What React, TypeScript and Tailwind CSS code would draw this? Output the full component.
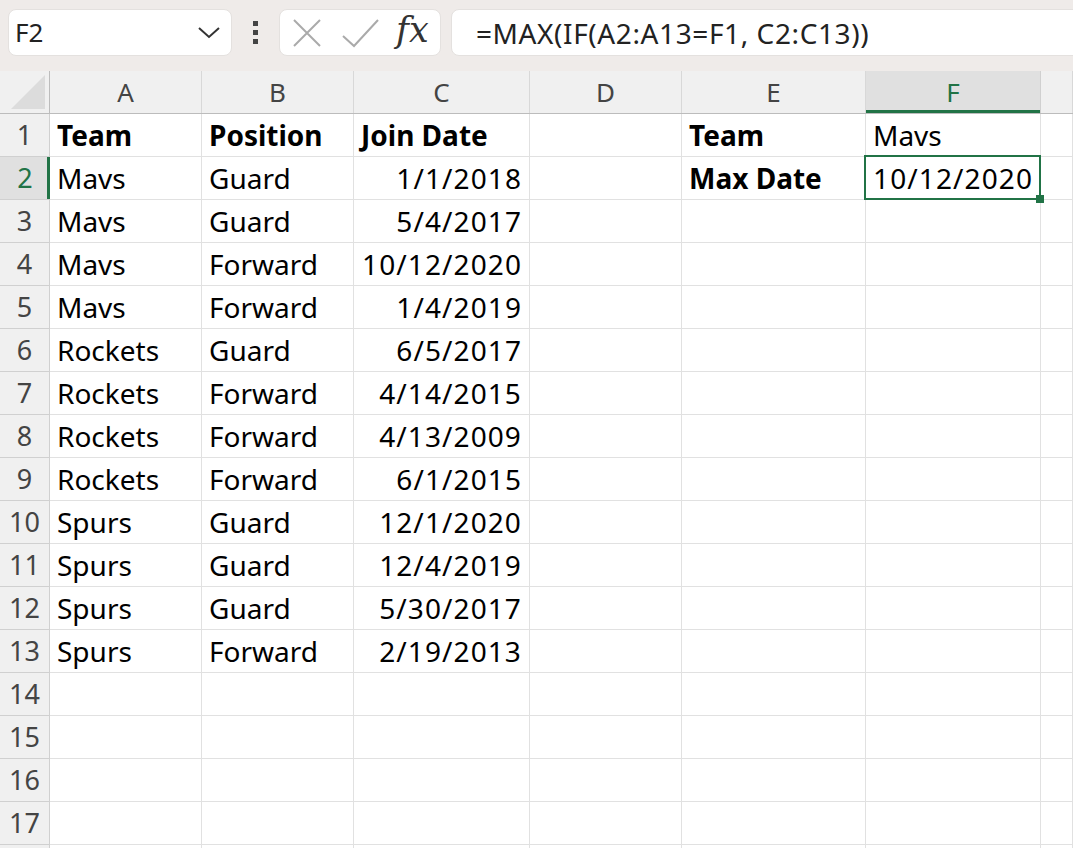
import React from "react";

const cols = ["A", "B", "C", "D", "E", "F", "G"];

const data: string[][] = [
  ["Team", "Position", "Join Date", "", "Team", "Mavs"],
  ["Mavs", "Guard", "1/1/2018", "", "Max Date", "10/12/2020"],
  ["Mavs", "Guard", "5/4/2017"],
  ["Mavs", "Forward", "10/12/2020"],
  ["Mavs", "Forward", "1/4/2019"],
  ["Rockets", "Guard", "6/5/2017"],
  ["Rockets", "Forward", "4/14/2015"],
  ["Rockets", "Forward", "4/13/2009"],
  ["Rockets", "Forward", "6/1/2015"],
  ["Spurs", "Guard", "12/1/2020"],
  ["Spurs", "Guard", "12/4/2019"],
  ["Spurs", "Guard", "5/30/2017"],
  ["Spurs", "Forward", "2/19/2013"],
];

const font = { fontFamily: '"Noto Sans", "Open Sans", sans-serif' };

function Toolbar() {
  return (
    <div className="flex items-center h-[71px] bg-[#efebe9] pl-2 pb-[7px] pt-[1px]">
      <div className="flex items-center justify-between w-[224px] h-[47px] bg-white rounded-lg border border-[#e4e1df] pl-[6px] pr-[10px]">
        <span className="text-[26px] text-[#222]">F2</span>
        <svg width="24" height="14" viewBox="0 0 24 14">
          <path d="M2 2 L12 11 L22 2" fill="none" stroke="#333" strokeWidth="2" />
        </svg>
      </div>
      <div className="flex flex-col gap-[4px] ml-[21px] mr-[21px]">
        <div className="w-[5px] h-[5px] bg-[#444]" />
        <div className="w-[5px] h-[5px] bg-[#444]" />
        <div className="w-[5px] h-[5px] bg-[#444]" />
      </div>
      <div className="flex items-center w-[162px] h-[47px] bg-white rounded-lg border border-[#e4e1df] pl-[12px]">
        <svg width="30" height="30" viewBox="0 0 30 30">
          <path d="M2 2 L28 28 M28 2 L2 28" stroke="#aaa" strokeWidth="2" fill="none" />
        </svg>
        <svg width="38" height="30" viewBox="0 0 38 30" className="ml-[20px]">
          <path d="M1 18 L12 28 L36 2" stroke="#aaa" strokeWidth="2" fill="none" />
        </svg>
        <span
          className="ml-[16px] text-[35px] italic text-[#333] leading-none -mt-[4px]"
          style={{ fontFamily: '"DejaVu Serif", "Liberation Serif", serif' }}
        >
          fx
        </span>
      </div>
      <div className="flex items-center flex-1 h-[47px] ml-[10px] -mr-[12px] bg-white rounded-lg border border-[#e4e1df] pl-[24px]">
        <span className="text-[28px] tracking-[0.6px] text-[#222]">=MAX(IF(A2:A13=F1, C2:C13))</span>
      </div>
    </div>
  );
}

function HeaderRow() {
  return (
    <div className="grid grid-cols-[50px_152px_152px_176px_152px_184px_175px_1fr] h-[43px] bg-[#f0f0f0] border-b border-[#bcbcbc]">
      <div className="relative border-r border-[#bcbcbc]">
        <div
          className="absolute right-[4px] bottom-[4px] w-[34px] h-[34px] bg-[#dcdcdc]"
          style={{ clipPath: "polygon(100% 0, 100% 100%, 0 100%)" }}
        />
      </div>
      {cols.map((c) =>
        c === "F" ? (
          <div
            key={c}
            className="flex items-center justify-center bg-[#e0e0e0] border-r border-[#d0d0d0] text-[26px] text-[#217346] shadow-[inset_0_-3px_0_#217346]"
          >
            {c}
          </div>
        ) : (
          <div
            key={c}
            className="flex items-center justify-center border-r border-[#d8d8d8] text-[26px] text-[#444]"
          >
            {c === "G" ? "" : c}
          </div>
        )
      )}
    </div>
  );
}

function Row({ n }: { n: number }) {
  const r = data[n - 1] || [];
  return (
    <div className="grid grid-cols-[50px_152px_152px_176px_152px_184px_175px_1fr] h-[43px]">
      {n === 2 ? (
        <div className="flex items-center justify-center bg-[#e0e0e0] border-b border-[#d0d0d0] text-[27px] text-[#217346] shadow-[inset_-3px_0_0_#217346]">
          {n}
        </div>
      ) : (
        <div className="flex items-center justify-center bg-[#f0f0f0] border-b border-r border-[#d0d0d0] text-[27px] text-[#444]">
          {n <= 17 ? n : ""}
        </div>
      )}
      {cols.map((c, i) => {
        const v = r[i] || "";
        const isDate = (i === 2 && n >= 2) || (i === 5 && n === 2);
        const isBold = n === 1 ? i !== 5 : i === 4 && n === 2;
        const sel = c === "F" && n === 2;
        return (
          <div
            key={c}
            className={
              "relative flex items-center px-[7px] border-r border-b border-[#e1e1e1] text-[28px] text-black whitespace-nowrap " +
              (isDate ? "justify-end tracking-[1.1px] " : "justify-start ") +
              (isBold ? "font-bold" : "")
            }
          >
            {v}
            {sel && (
              <>
                <div className="absolute -left-[2px] -top-[2px] -right-[1px] -bottom-[1px] border-2 border-[#217346]" />
                <div className="absolute -right-[4px] -bottom-[4px] w-[8px] h-[8px] bg-[#217346] z-10" />
              </>
            )}
          </div>
        );
      })}
    </div>
  );
}

export default function App() {
  const rows = Array.from({ length: 18 }, (_, i) => i + 1);
  return (
    <div className="w-[1073px] h-[848px] overflow-hidden bg-white" style={font}>
      <Toolbar />
      <HeaderRow />
      {rows.map((n) => (
        <Row key={n} n={n} />
      ))}
    </div>
  );
}
